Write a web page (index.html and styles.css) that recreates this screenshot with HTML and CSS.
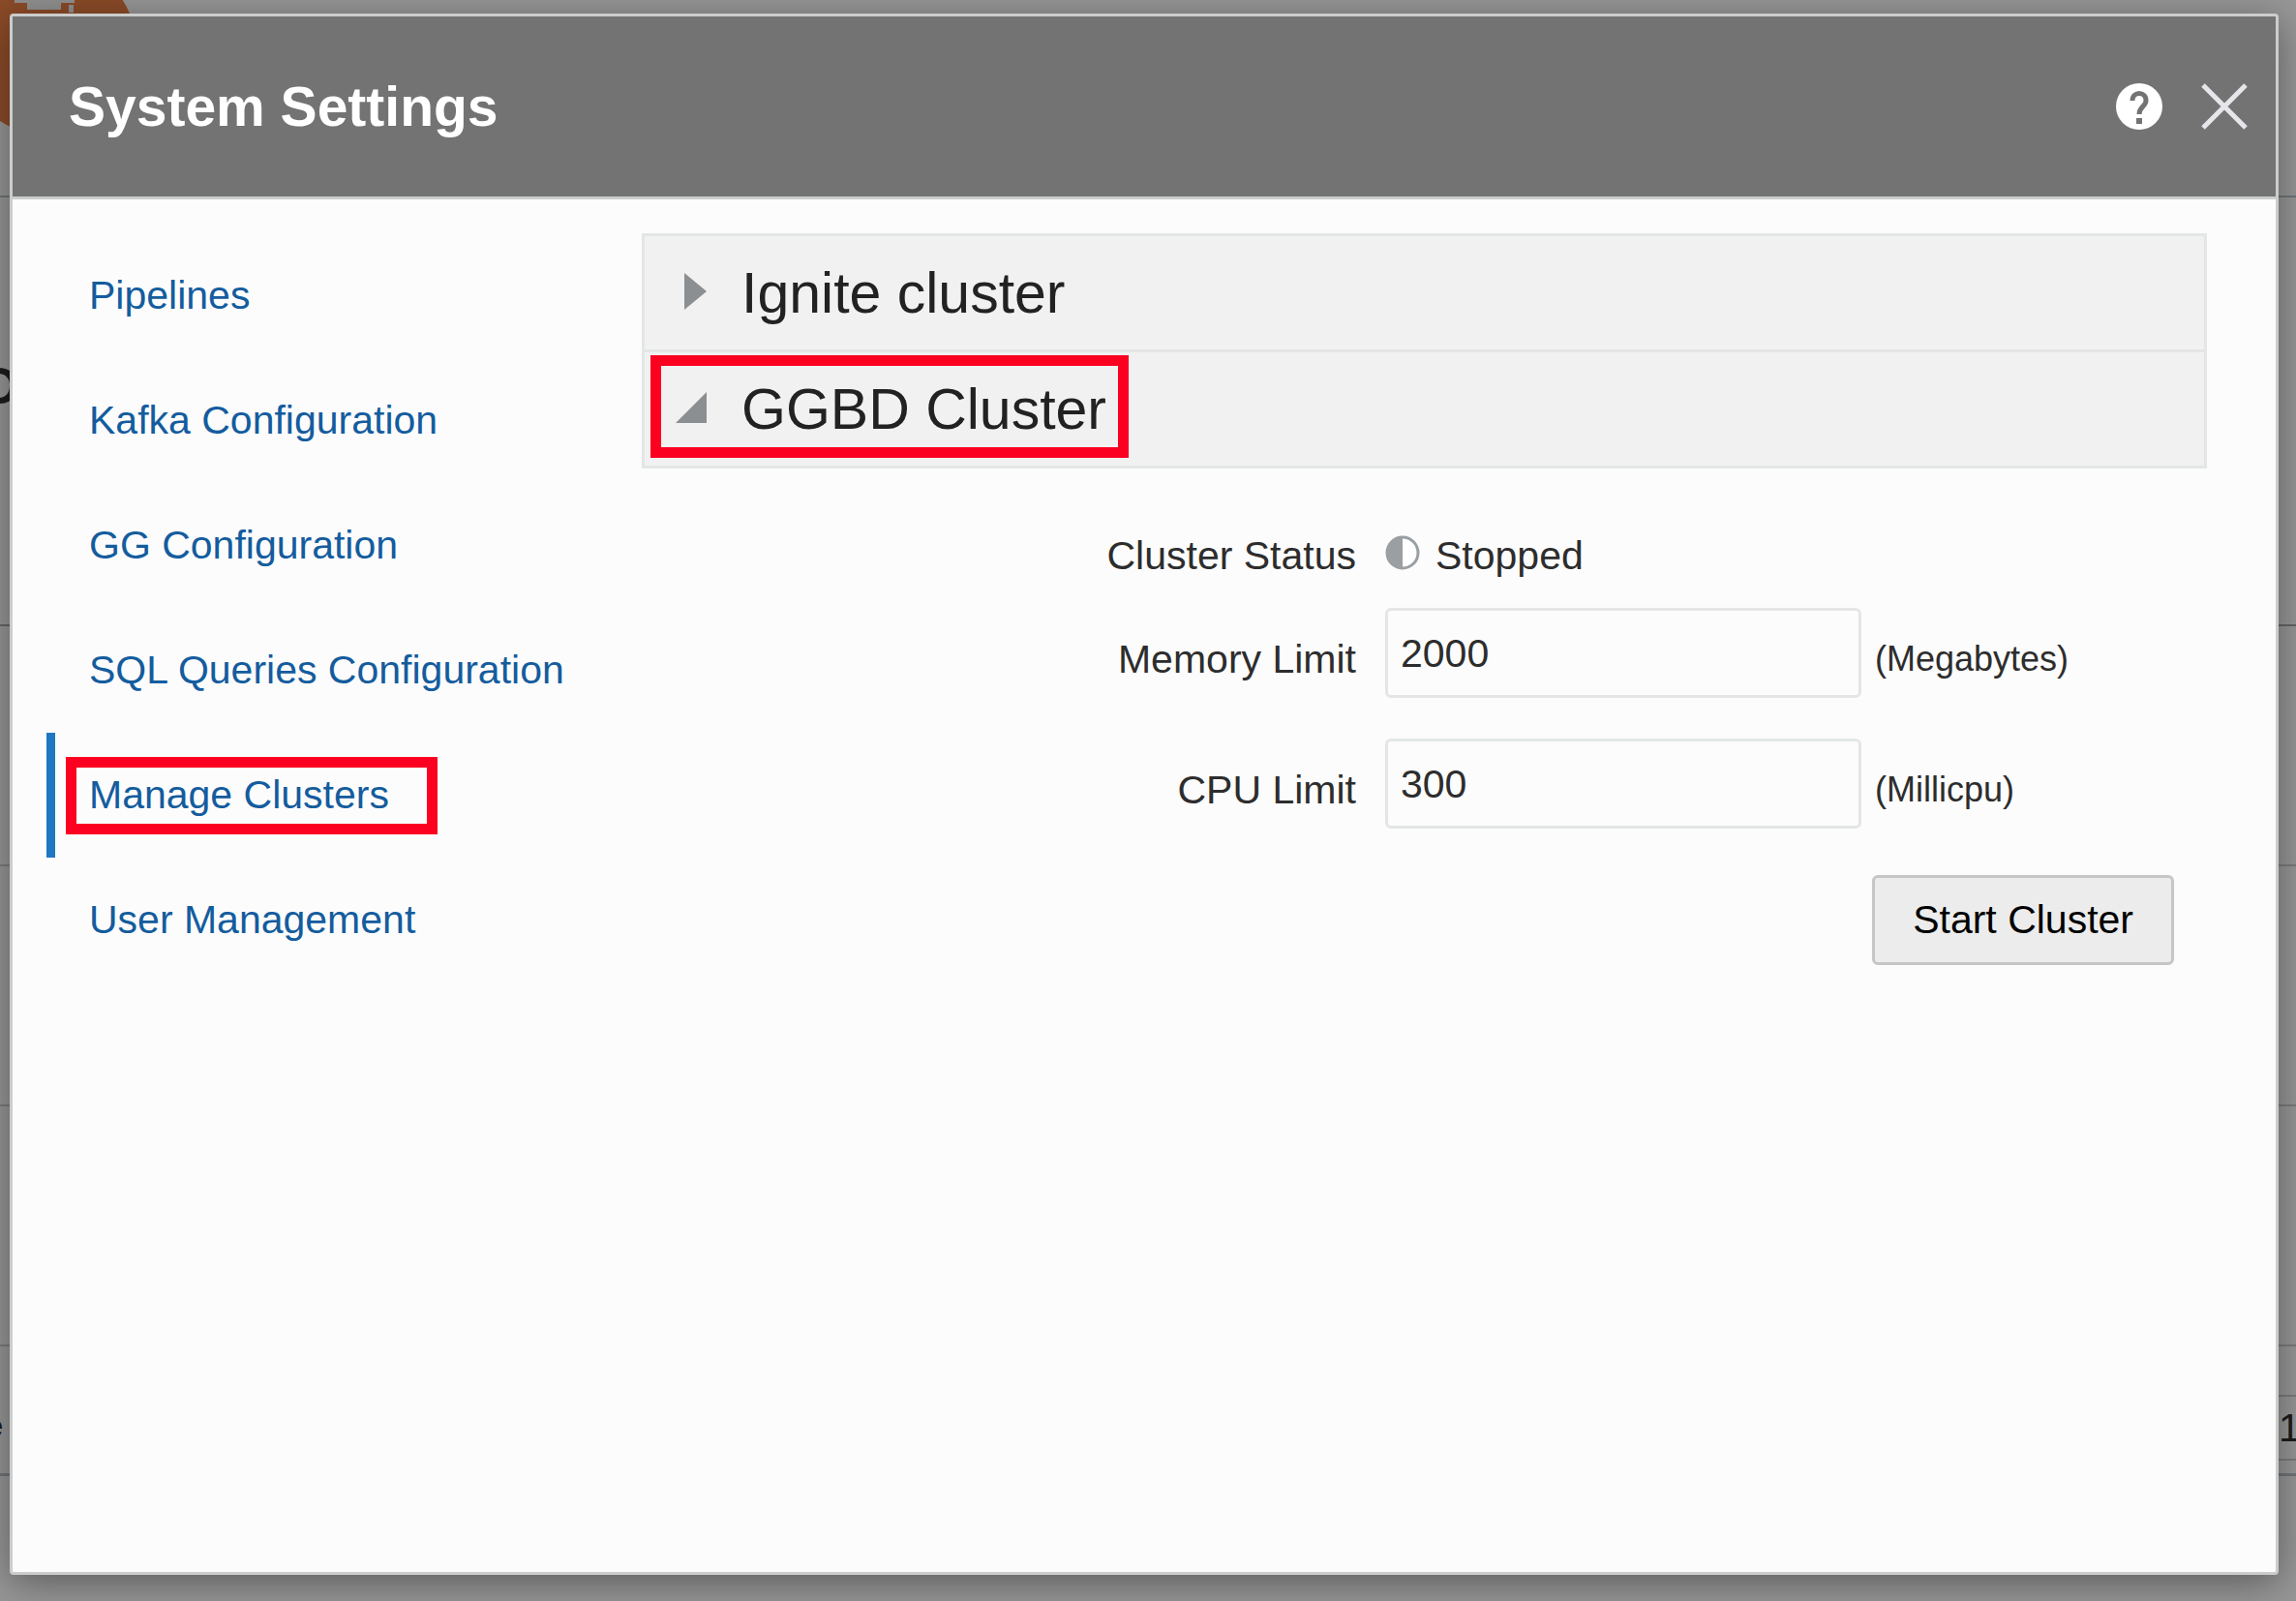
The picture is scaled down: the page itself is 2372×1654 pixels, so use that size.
FILE: index.html
```html
<!DOCTYPE html>
<html lang="en">
<head>
<meta charset="utf-8">
<title>System Settings</title>
<link rel="stylesheet" href="styles.css">
</head>
<body>
<div class="page" aria-hidden="true">
  <div class="page-top">
    <svg class="logo" width="142" height="142" viewBox="0 0 142 142"><circle cx="50" cy="49" r="91" fill="#8b4b28"/><path d="M15 0H77V3H63V10H28V3H15Z" fill="#909090"/><path d="M71 5H76V13H71Z" fill="#909090"/></svg>
  </div>
  <div class="page-title"><span class="clip-start">D</span></div>
  <div class="page-row"></div>
  <div class="page-row"></div>
  <div class="page-row"></div>
  <div class="page-foot"><span class="clip-start foot-label">e</span><span class="pager">1</span></div>
</div>
<main class="dialog" role="dialog" aria-labelledby="dialog-title">
  <header class="dialog-header">
    <h1 class="dialog-title" id="dialog-title">System Settings</h1>
    <button class="icon-button" type="button" aria-label="Help">
      <svg width="48" height="48" viewBox="0 0 48 48"><circle cx="24" cy="24" r="24" fill="#fff"/><path d="M17 18C17 8 31 8 31 18C31 24 24 24 24 32" fill="none" stroke="#737373" stroke-width="5"/><rect x="21" y="36" width="6" height="6" fill="#737373"/></svg>
    </button>
    <button class="icon-button" type="button" aria-label="Close">
      <svg width="48" height="48" viewBox="0 0 48 48"><path d="M2 2L46 46M46 2L2 46" stroke="#e6e6ea" stroke-width="5"/></svg>
    </button>
  </header>
  <div class="dialog-body">
    <nav class="nav">
      <a class="nav-item" href="#pipelines">Pipelines</a>
      <a class="nav-item" href="#kafka">Kafka Configuration</a>
      <a class="nav-item" href="#gg">GG Configuration</a>
      <a class="nav-item" href="#sql">SQL Queries Configuration</a>
      <a class="nav-item current" href="#clusters" aria-current="page">Manage Clusters<span class="marker marker-nav"></span></a>
      <a class="nav-item" href="#users">User Management</a>
    </nav>
    <section class="content">
      <div class="accordion">
        <button class="accordion-row" type="button" aria-expanded="false">
          <svg class="arrow" width="34" height="42" viewBox="0 0 34 42"><path d="M10 0L33 19L10 38Z" fill="#8b8f92"/></svg>
          Ignite cluster
        </button>
        <button class="accordion-row" type="button" aria-expanded="true">
          <svg class="arrow" width="34" height="42" viewBox="0 0 34 42"><path d="M33 3V35H1Z" fill="#8b8f92"/></svg>
          GGBD Cluster<span class="marker marker-cluster"></span>
        </button>
      </div>
      <form class="form">
        <div class="field status">
          <span class="label">Cluster Status</span>
          <span class="status-value"><svg width="36" height="42" viewBox="0 0 36 42"><circle cx="18" cy="18" r="16" fill="#fff" stroke="#9a9fa3" stroke-width="3"/><path d="M18 1A17 17 0 0 0 18 35Z" fill="#9a9fa3"/></svg>Stopped</span>
        </div>
        <div class="field">
          <label class="label" for="memory">Memory Limit</label>
          <input class="input" id="memory" type="text" value="2000">
          <span class="unit">(Megabytes)</span>
        </div>
        <div class="field">
          <label class="label" for="cpu">CPU Limit</label>
          <input class="input" id="cpu" type="text" value="300">
          <span class="unit">(Millicpu)</span>
        </div>
        <div class="actions"><button class="start" type="button">Start Cluster</button></div>
      </form>
    </section>
  </div>
</main>
</body>
</html>
```
FILE: styles.css
```css
* { box-sizing: border-box; }

body {
  margin: 0;
  min-height: 100vh;
  display: grid;
  background: #979797;
  color: #2d2d2d;
  font-family: "Liberation Sans", Arial, sans-serif;
  font-size: 41px;
  overflow: hidden;
}

button, input { font: inherit; color: inherit; }

/* Dimmed page behind the dialog */
.page, .dialog { grid-area: 1 / 1; }

.page { color: #1c1c1c; }

.page-top {
  height: 204px;
  border-bottom: 2px solid #6f757a;
  overflow: hidden;
}

.logo { display: block; }

.page-title {
  height: 443px;
  padding-top: 162px;
  border-bottom: 2px solid #666;
  font-size: 54px;
  font-weight: bold;
  line-height: 64px;
}

.clip-start {
  display: flex;
  justify-content: flex-end;
  width: 20px;
}

.page-row {
  height: 248px;
  border-bottom: 2px solid #7c7c7c;
}

.page-foot {
  display: flex;
  justify-content: space-between;
  height: 134px;
  padding-top: 50px;
  border-bottom: 3px solid #6f757a;
  line-height: 64px;
}

.clip-start.foot-label {
  width: 3px;
  font-weight: bold;
  font-size: 32px;
}

.pager {
  width: 18px;
  height: 68px;
  border-top: 2px solid #7c7c7c;
  border-bottom: 2px solid #7c7c7c;
}

/* Dialog */
.dialog {
  display: flex;
  flex-direction: column;
  position: relative;
  margin: 14px 18px 27px 10px;
  border: 3px solid #cbcdcd;
  border-radius: 4px;
  background: #fcfcfc;
  box-shadow: 0 8px 40px rgba(0, 0, 0, 0.4);
}

.dialog-header {
  display: flex;
  align-items: center;
  gap: 40px;
  height: 189px;
  padding: 0 29px 0 58px;
  border-bottom: 3px solid #cbcdcd;
  background: #737373;
  color: #fff;
}

.dialog-title {
  flex: 1;
  margin: 0;
  font-size: 57px;
  line-height: 64px;
}

.icon-button {
  display: flex;
  padding: 0;
  border: 0;
  background: none;
}

.dialog-body {
  display: flex;
  flex: 1;
  padding: 35px 71px 0 35px;
}

.nav {
  display: flex;
  flex-direction: column;
  width: 615px;
}

.nav-item {
  display: flex;
  align-items: center;
  position: relative;
  height: 129px;
  padding-left: 35px;
  border-left: 9px solid transparent;
  color: #145c9e;
  text-decoration: none;
}

.nav-item.current { border-color: #1f77c4; }

/* Red call-out frames */
.marker {
  position: absolute;
  border: 11px solid #fb0020;
}

.marker-nav { inset: 25px auto 24px 11px; width: 384px; }

.marker-cluster { inset: 3px auto 8px 6px; width: 494px; }

.content { flex: 1; }

.accordion {
  border: 3px solid #e4e6e6;
  background: #f1f1f1;
}

.accordion-row {
  display: flex;
  align-items: center;
  gap: 35px;
  position: relative;
  width: 100%;
  height: 117px;
  padding: 0 0 0 31px;
  border: 0;
  background: none;
  color: #222;
  font-size: 59px;
}

.accordion-row + .accordion-row {
  height: 120px;
  border-top: 3px solid #e4e6e6;
}

.form { padding: 58px 34px 0 0; }

.field {
  display: grid;
  grid-template-columns: 768px 492px 1fr;
  align-items: center;
  margin-bottom: 42px;
}

.field.status { height: 64px; margin-bottom: 22px; }

.label { padding-right: 30px; text-align: right; }

.field .label, .unit { line-height: 48px; }

.field:not(.status) .label, .unit { padding-top: 13px; }

.status-value {
  display: flex;
  align-items: center;
  gap: 16px;
}

.input {
  width: 100%;
  height: 93px;
  padding: 2px 13px 0;
  border: 3px solid #e4e6e6;
  border-radius: 6px;
  background: #fcfcfc;
}

.unit {
  padding-left: 14px;
  font-size: 36px;
}

.actions {
  display: flex;
  justify-content: flex-end;
  padding-top: 6px;
}

.start {
  height: 93px;
  padding: 0 39px;
  border: 3px solid #c4c6c8;
  border-radius: 6px;
  background: #ececec;
  color: #000;
}
```
